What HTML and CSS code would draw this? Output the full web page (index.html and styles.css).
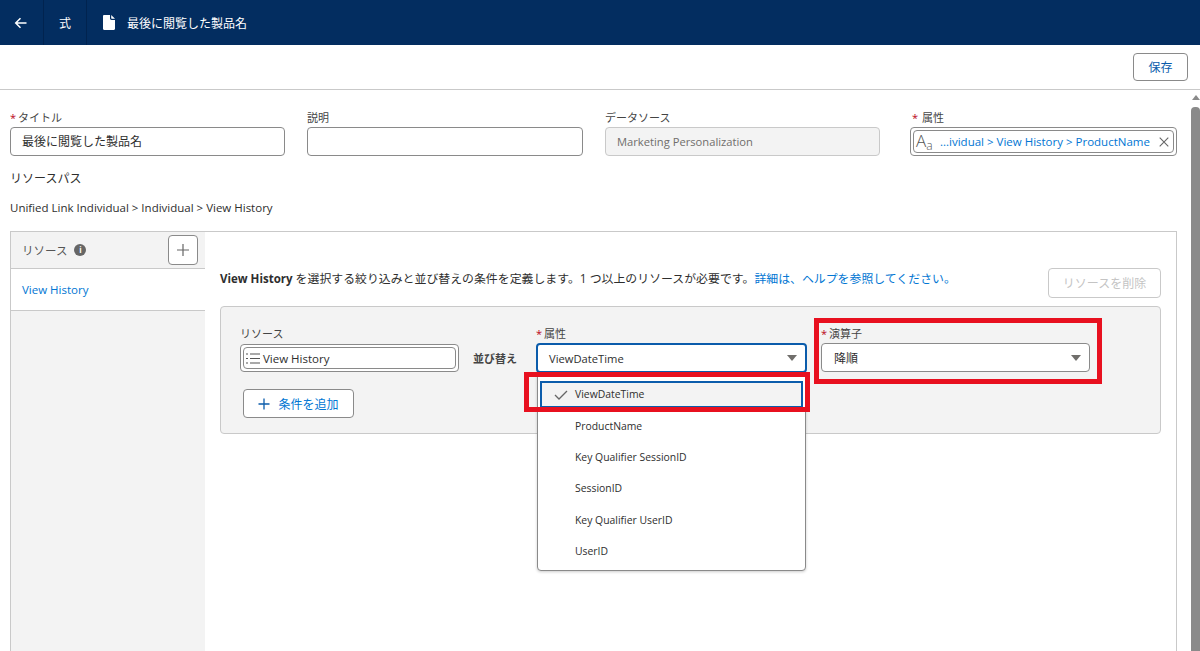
FILE: index.html
```html
<!DOCTYPE html>
<html lang="ja">

<head>
    <meta charset="UTF-8">
    <title>最後に閲覧した製品名</title>
    <link rel="stylesheet" href="styles.css">
</head>

<body>
    <header class="topbar">
        <div class="topbar-cell back-cell">
            <svg width="13" height="12" viewBox="0 0 13 12"><path d="M12.500 6H2M6.500 1.200 1.700 6l4.800 4.800" fill="none" stroke="#fff" stroke-width="1.500"/></svg>
        </div>
        <div class="topbar-cell type-cell">式</div>
        <div class="topbar-title">
            <svg width="12" height="15" viewBox="0 0 12 15"><path d="M1.200 0H7v3.600c0 .8.600 1.400 1.400 1.400H12v8.800c0 .7-.5 1.200-1.200 1.200H1.200C.5 15 0 14.500 0 13.800V1.200C0 .5.500 0 1.200 0ZM8.200 0 12 3.800H8.700c-.3 0-.5-.2-.5-.5Z" fill="#fff"/></svg>
            <span>最後に閲覧した製品名</span>
        </div>
    </header>

    <div class="toolbar">
        <button class="btn save-btn">保存</button>
    </div>

    <main class="content">
        <div class="form-row">
            <div class="field">
                <label class="field-label"><span class="req">*</span>タイトル</label>
                <div class="input input-cjk">最後に閲覧した製品名</div>
            </div>
            <div class="field">
                <label class="field-label">説明</label>
                <div class="input"></div>
            </div>
            <div class="field">
                <label class="field-label">データソース</label>
                <div class="input input-disabled">Marketing Personalization</div>
            </div>
            <div class="field field-attr">
                <label class="field-label"><span class="req req-wide">*</span>属性</label>
                <div class="pill-outer">
                    <div class="pill">
                        <span class="aa-icon">A<small>a</small></span>
                        <span class="pill-text">...ividual &gt; View History &gt; ProductName</span>
                        <svg width="10" height="10" viewBox="0 0 10 10"><path d="M.7.7l8.600 8.600M9.300.7.700 9.300" stroke="#666" stroke-width="1.100"/></svg>
                    </div>
                </div>
            </div>
        </div>

        <div class="path-title">リソースパス</div>
        <div class="path-value">Unified Link Individual &gt; Individual &gt; View History</div>

        <section class="card">
            <aside class="sidebar">
                <div class="sidebar-head">
                    <span class="sidebar-title">リソース</span>
                    <span class="info-dot">i</span>
                    <button class="btn add-square">
                        <svg width="14" height="14" viewBox="0 0 14 14"><path d="M7 1v12M1 7h12" stroke="#666" stroke-width="1.200"/></svg>
                    </button>
                </div>
                <div class="sidebar-item">View History</div>
            </aside>

            <div class="detail">
                <div class="detail-head">
                    <p class="intro"><b>View History</b> を選択する絞り込みと並び替えの条件を定義します。1 つ以上のリソースが必要です。<a class="link">詳細は、ヘルプを参照してください。</a></p>
                    <button class="btn delete-btn" disabled>リソースを削除</button>
                </div>

                <div class="panel">
                    <div class="panel-row">
                        <div class="col-resource">
                            <label class="field-label">リソース</label>
                            <div class="pill-outer pill-resource">
                                <div class="pill">
                                    <svg width="14" height="11" viewBox="0 0 14 11"><path d="M0 1h2M4 1h10M0 5.500h2M4 5.500h10M0 10h2M4 10h10" stroke="#555" stroke-width="1.200"/></svg>
                                    <span>View History</span>
                                </div>
                            </div>
                            <button class="btn add-btn">
                                <svg width="12" height="12" viewBox="0 0 12 12"><path d="M6 .5v11M.5 6h11" stroke="#0b5cab" stroke-width="1.300"/></svg>
                                <span>条件を追加</span>
                            </button>
                        </div>

                        <div class="sort-label">並び替え</div>

                        <div class="col-attr">
                            <label class="field-label"><span class="req">*</span>属性</label>
                            <div class="select select-open">
                                <span>ViewDateTime</span>
                                <i class="caret"></i>
                            </div>
                            <ul class="menu">
                                <li class="menu-item menu-item-active">
                                    <svg width="14" height="10" viewBox="0 0 14 10"><path d="M1 5 5 9l8-8" fill="none" stroke="#666" stroke-width="1.300"/></svg>
                                    <span>ViewDateTime</span>
                                </li>
                                <li class="menu-item">ProductName</li>
                                <li class="menu-item">Key Qualifier SessionID</li>
                                <li class="menu-item">SessionID</li>
                                <li class="menu-item">Key Qualifier UserID</li>
                                <li class="menu-item">UserID</li>
                            </ul>
                            <div class="red-box red-attr"></div>
                        </div>

                        <div class="col-op">
                            <label class="field-label"><span class="req">*</span>演算子</label>
                            <div class="select">
                                <span class="select-cjk">降順</span>
                                <i class="caret"></i>
                            </div>
                            <div class="red-box red-op"></div>
                        </div>
                    </div>
                </div>
            </div>
        </section>
    </main>

    <div class="scrollbar">
        <i class="scroll-up"></i>
        <div class="scroll-thumb"></div>
    </div>
</body>

</html>
```

FILE: styles.css
```css
* {
    box-sizing: border-box;
}

body {
    margin: 0;
    width: 1200px;
    height: 651px;
    overflow: hidden;
    position: relative;
    background: #fff;
    color: #2e2e2e;
    font-family: "Open Sans", "Noto Sans CJK JP", sans-serif;
    font-size: 11.5px;
}

label {
    display: block;
}

.topbar {
    height: 45px;
    background: #032d60;
    color: #fff;
    display: flex;
    align-items: stretch;
}

.topbar-cell {
    display: flex;
    align-items: center;
    justify-content: center;
    border-right: 1px solid #01234f;
}

.back-cell {
    width: 44px;
    padding-right: 2px;
}

.type-cell {
    width: 43px;
    font-size: 12px;
}

.topbar-title {
    display: flex;
    align-items: center;
    gap: 12px;
    padding-left: 16px;
    font-size: 12px;
}

.toolbar {
    height: 45px;
    border-bottom: 1px solid #c9c9c9;
    display: flex;
    justify-content: flex-end;
    padding: 8px 12px 0 0;
}

.btn {
    background: #fff;
    border: 1px solid #8a8a8a;
    border-radius: 4px;
    font: inherit;
    padding: 0;
    display: flex;
    align-items: center;
    justify-content: center;
}

.save-btn {
    width: 55px;
    height: 28px;
    color: #0b5cab;
    font-size: 12px;
}

.content {
    padding: 21px 23px 0 10px;
}

.form-row {
    display: flex;
    height: 46px;
}

.field {
    width: 275px;
    margin-right: 22px;
}

.field:nth-child(2) {
    width: 276px;
}

.field-attr {
    width: 267px;
    margin: 0 0 0 8px;
}

.field-label {
    height: 16px;
    line-height: 14px;
    color: #444;
    font-size: 11px;
}

.req {
    color: #ba0517;
    margin-right: 2px;
}

.req-wide {
    margin-right: 4px;
    margin-left: 2px;
}

.input {
    height: 29px;
    line-height: 27px;
    border: 1px solid #8a8a8a;
    border-radius: 4px;
    padding: 0 11px;
    background: #fff;
}

.input-cjk {
    font-size: 12px;
}

.input-disabled {
    background: #f3f3f3;
    border-color: #c9c9c9;
    color: #706e6b;
    font-size: 11.2px;
}

.pill-outer {
    height: 29px;
    border: 1px solid #8a8a8a;
    border-radius: 4px;
    padding: 2px;
    background: #fff;
}

.pill {
    height: 100%;
    border: 1px solid #8a8a8a;
    border-radius: 4px;
    display: flex;
    align-items: center;
    padding: 0 4px 0 2px;
}

.aa-icon {
    font-size: 17px;
    font-weight: 300;
    color: #555;
    line-height: 1;
    width: 24px;
    flex: none;
}

.aa-icon small {
    font-size: 12px;
    vertical-align: -3px;
}

.pill-text {
    color: #0176d3;
    flex: 1;
    white-space: nowrap;
}

.path-title {
    margin-top: 14px;
    line-height: 16px;
    font-size: 12px;
}

.path-value {
    margin-top: 13px;
    line-height: 16px;
}

.card {
    margin-top: 15px;
    height: 420px;
    border: 1px solid #c9c9c9;
    border-bottom: 0;
    display: flex;
}

.sidebar {
    width: 194px;
    background: #f3f3f3;
    flex: none;
}

.sidebar-head {
    height: 37px;
    border-bottom: 1px solid #c9c9c9;
    display: flex;
    align-items: center;
    padding: 0 7px 0 11px;
    gap: 7px;
}

.sidebar-title {
    color: #555;
}

.info-dot {
    width: 12px;
    height: 12px;
    border-radius: 50%;
    background: #666;
    color: #fff;
    font-size: 8px;
    font-weight: 700;
    line-height: 12px;
    text-align: center;
}

.add-square {
    width: 30px;
    height: 30px;
    margin-left: auto;
}

.sidebar-item {
    height: 42px;
    line-height: 41px;
    background: #fff;
    border-bottom: 1px solid #c9c9c9;
    padding-left: 11px;
    color: #0176d3;
}

.detail {
    flex: 1;
    padding: 36px 15px 0 15px;
}

.detail-head {
    display: flex;
    justify-content: space-between;
    height: 38px;
}

.intro {
    margin: 2px 0 0;
    line-height: 16px;
    font-size: 11.9px;
    white-space: nowrap;
}

.intro b {
    font-size: 11.5px;
}

.link {
    color: #0176d3;
}

.delete-btn {
    width: 113px;
    height: 30px;
    border-color: #c9c9c9;
    color: #c4c4c4;
    font-size: 12px;
}

.panel {
    height: 128px;
    background: #f3f3f3;
    border: 1px solid #c9c9c9;
    border-radius: 4px;
    padding: 19px 0 0 19px;
}

.panel-row {
    display: flex;
}

.panel-row .field-label {
    height: 17px;
    line-height: 15px;
}

.col-resource {
    width: 219px;
}

.pill-resource {
    height: 28px;
    margin-top: 1px;
}

.pill-resource .pill {
    gap: 3px;
}

.add-btn {
    width: 111px;
    height: 29px;
    margin: 17px 0 0 3px;
    color: #0176d3;
    font-size: 12px;
    gap: 8px;
}

.sort-label {
    width: 77px;
    padding: 24px 0 0 14px;
    font-weight: 700;
    font-size: 11px;
    color: #444;
}

.col-attr,
.col-op {
    position: relative;
}

.col-attr {
    width: 271px;
}

.col-op {
    width: 269px;
    margin-left: 14px;
}

.select {
    height: 29px;
    background: #fff;
    border: 1px solid #8a8a8a;
    border-radius: 4px;
    display: flex;
    align-items: center;
    justify-content: space-between;
    padding: 0 8px 0 12px;
    font-size: 11.2px;
}

.select-cjk {
    font-size: 12px;
}

.select-open {
    height: 30px;
    border: 2px solid #0b5cab;
    padding-left: 11px;
}

.caret {
    width: 0;
    height: 0;
    border-left: 5px solid transparent;
    border-right: 5px solid transparent;
    border-top: 6px solid #706e6b;
}

.menu {
    position: absolute;
    left: 1px;
    top: 47px;
    width: 269px;
    height: 198px;
    margin: 0;
    padding: 7px 0 0;
    list-style: none;
    background: #fff;
    border: 1px solid #8a8a8a;
    border-radius: 0 0 4px 4px;
    box-shadow: 0 1px 3px rgba(0, 0, 0, .2);
    font-size: 10.4px;
}

.menu-item {
    height: 31.2px;
    line-height: 31px;
    padding-left: 37px;
    position: relative;
}

.menu-item-active {
    margin: 0 2px 3px;
    height: 27px;
    line-height: 23px;
    padding-left: 33px;
    background: #f3f3f3;
    border: 2px solid #0b5cab;
}

.menu-item-active svg {
    position: absolute;
    left: 12px;
    top: 7px;
}

.red-box {
    position: absolute;
    border: 5px solid #e8101f;
    pointer-events: none;
}

.red-attr {
    left: -12px;
    top: 46px;
    width: 286px;
    height: 40px;
}

.red-op {
    left: -7px;
    top: -8px;
    width: 288px;
    height: 66px;
}

.scrollbar {
    position: absolute;
    left: 1191px;
    top: 90px;
    width: 9px;
    height: 561px;
    overflow: hidden;
}

.scroll-up {
    display: block;
    width: 0;
    height: 0;
    margin: 5px auto 0;
    border-left: 4px solid transparent;
    border-right: 4px solid transparent;
    border-bottom: 5px solid #8a8a8a;
}

.scroll-thumb {
    margin-top: 7px;
    height: 544px;
    background: #8a8a8a;
    border-radius: 4px 4px 0 0;
}
```
